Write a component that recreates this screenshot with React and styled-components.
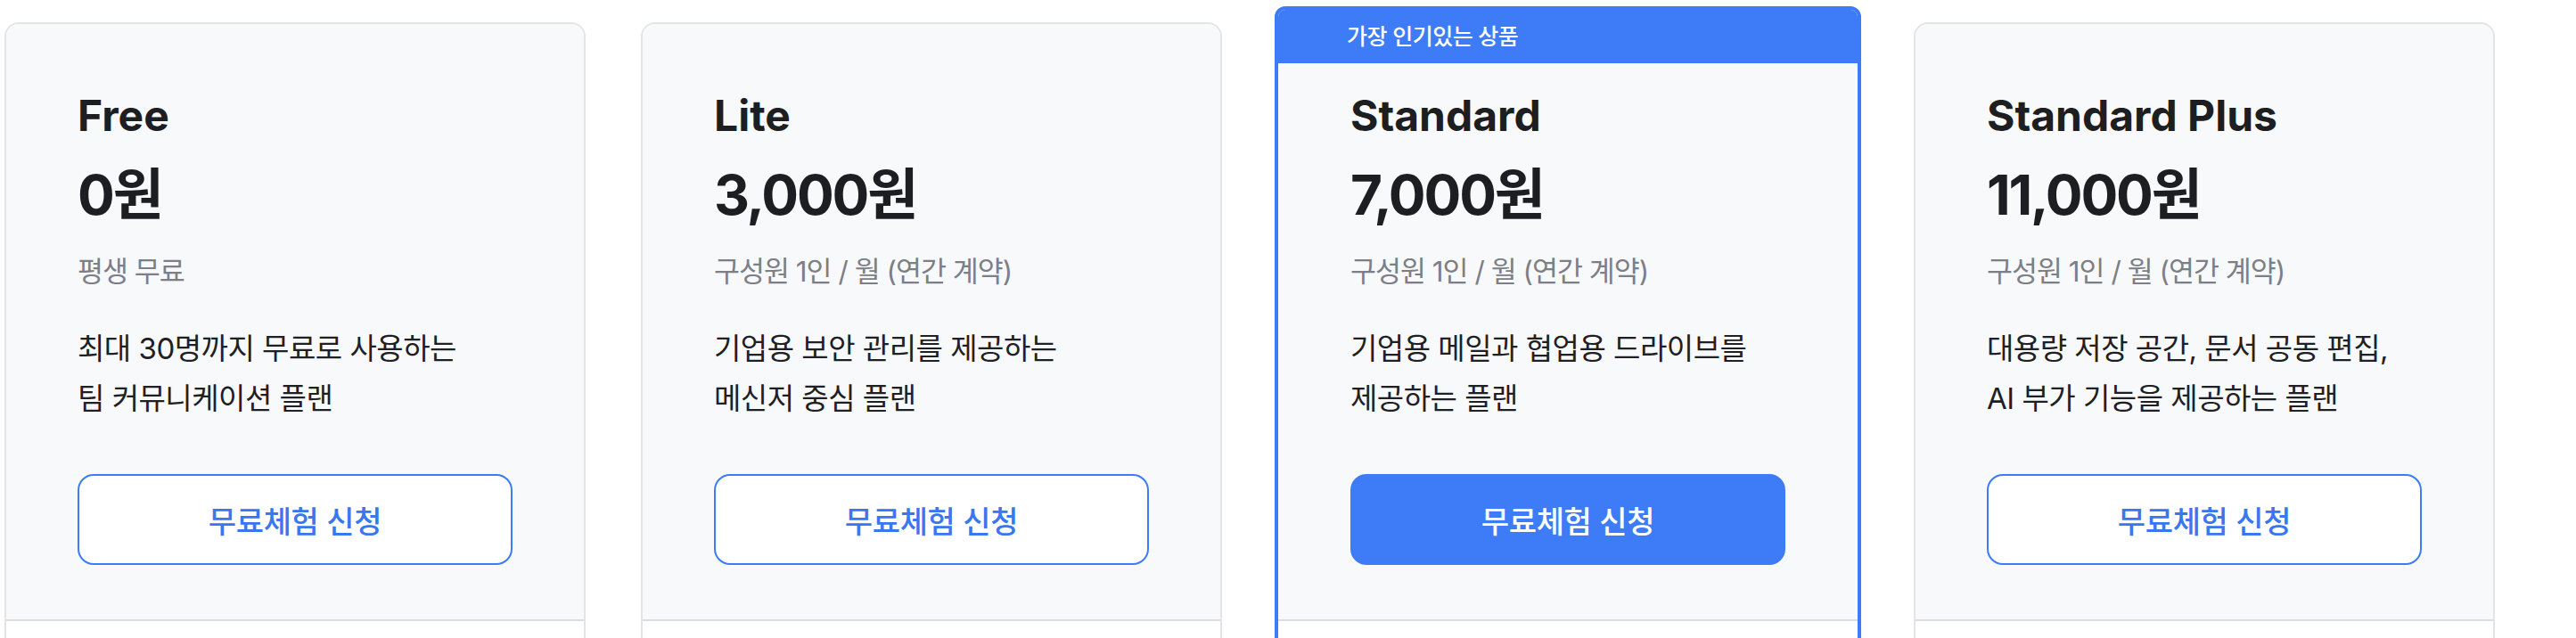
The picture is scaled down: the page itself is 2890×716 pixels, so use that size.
import React from 'react'
import styled, { createGlobalStyle } from 'styled-components'

const plans = [
    {
        id: 'free',
        name: 'Free',
        price: '0원',
        unit: '평생 무료',
        desc: ['최대 30명까지 무료로 사용하는', '팀 커뮤니케이션 플랜'],
    },
    {
        id: 'lite',
        name: 'Lite',
        price: '3,000원',
        unit: '구성원 1인 / 월 (연간 계약)',
        desc: ['기업용 보안 관리를 제공하는', '메신저 중심 플랜'],
    },
    {
        id: 'standard',
        name: 'Standard',
        price: '7,000원',
        unit: '구성원 1인 / 월 (연간 계약)',
        desc: ['기업용 메일과 협업용 드라이브를', '제공하는 플랜'],
        popular: true,
    },
    {
        id: 'plus',
        name: 'Standard Plus',
        price: '11,000원',
        unit: '구성원 1인 / 월 (연간 계약)',
        desc: ['대용량 저장 공간, 문서 공동 편집,', 'AI 부가 기능을 제공하는 플랜'],
    },
]

const GlobalStyle = createGlobalStyle`
    html, body {
        margin: 0;
        padding: 0;
        background: #ffffff;
    }
    body {
        font-family: Inter, "Noto Sans CJK KR", sans-serif;
        -webkit-font-smoothing: antialiased;
    }
`

function App() {
    return (
        <>
            <GlobalStyle />
            <Page>
                <PlanRow>
                    {plans.map((plan) => (
                        <Card key={plan.id} $popular={plan.popular}>
                            {plan.popular && <Badge>가장 인기있는 상품</Badge>}
                            <Summary $popular={plan.popular}>
                                <PlanName>{plan.name}</PlanName>
                                <Price>{plan.price}</Price>
                                <Unit>{plan.unit}</Unit>
                                <Desc>
                                    {plan.desc.map((line) => (
                                        <span key={line}>{line}</span>
                                    ))}
                                </Desc>
                                <TrialButton $filled={plan.popular}>무료체험 신청</TrialButton>
                            </Summary>
                            <Features />
                        </Card>
                    ))}
                </PlanRow>
            </Page>
        </>
    )
}

const Page = styled.div`
    height: 716px;
    overflow: hidden;
    padding: 25px 0 0 5px;
    box-sizing: border-box;
`

const PlanRow = styled.div`
    display: flex;
    align-items: flex-start;
    gap: 62px;
`

const Card = styled.div`
    box-sizing: border-box;
    width: ${(p) => (p.$popular ? '658px' : '652px')};
    margin: ${(p) => (p.$popular ? '-18px -3px 0' : '0')};
    border: ${(p) => (p.$popular ? '4px solid #3d7bf7' : '2px solid #e3e4e7')};
    border-radius: ${(p) => (p.$popular ? '12px' : '16px')};
    overflow: hidden;
    display: flex;
    flex-direction: column;
    background: #ffffff;
`

const Badge = styled.div`
    height: 60px;
    display: flex;
    align-items: center;
    padding: 0 0 4px 77px;
    box-sizing: border-box;
    background: #3d7bf7;
    color: #ffffff;
    font-size: 25px;
    font-weight: 500;
    letter-spacing: -0.5px;
`

const Summary = styled.div`
    display: flex;
    flex-direction: column;
    padding: ${(p) => (p.$popular ? '29px 81px 61px' : '73px 80px 61px')};
    background: #f8f9fb;
    border-bottom: 2px solid #dcdde0;
`

const PlanName = styled.h2`
    margin: 0;
    font-size: 48px;
    line-height: 60px;
    font-weight: 700;
    letter-spacing: 0;
    color: #1d1e21;
`

const Price = styled.div`
    margin-top: 21px;
    font-size: 62px;
    line-height: 76px;
    font-weight: 700;
    letter-spacing: -0.035em;
    color: #1d1e21;
`

const Unit = styled.p`
    margin: 28px 0 0;
    font-size: 31.5px;
    line-height: 40px;
    letter-spacing: -1px;
    color: #7c7f86;
`

const Desc = styled.p`
    margin: 38px 0 0;
    display: flex;
    flex-direction: column;
    font-size: 33px;
    line-height: 56px;
    letter-spacing: -0.5px;
    color: #1f2023;
`

const TrialButton = styled.button`
    margin-top: 57px;
    height: 102px;
    width: 100%;
    border-radius: 18px;
    border: 2px solid #3d7bf7;
    background: ${(p) => (p.$filled ? '#3d7bf7' : '#ffffff')};
    color: ${(p) => (p.$filled ? '#ffffff' : '#3a77ef')};
    font-family: inherit;
    font-size: 34px;
    font-weight: 500;
    letter-spacing: -0.3px;
    cursor: pointer;
`

const Features = styled.div`
    height: 240px;
    background: #ffffff;
`

export default App
